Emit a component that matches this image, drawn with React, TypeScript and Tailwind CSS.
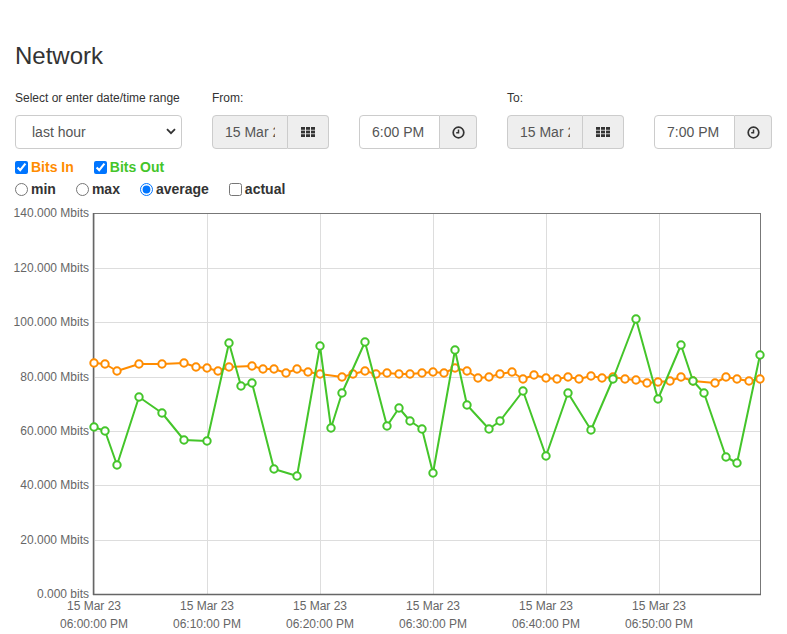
import React from "react";

const ORANGE = "#ff8c00";
const GREEN = "#44c52a";

// page-space points (x, y) read off the chart
const bitsIn: [number, number][] = [
  [94, 363], [105, 364], [117, 371], [139, 364], [162, 364], [184, 363], [196, 367], [207, 368],
  [218, 371], [229, 367], [252, 366], [263, 369], [274, 369], [286, 373], [297, 369], [308, 372],
  [320, 374], [342, 377], [353, 374], [365, 371], [376, 374], [387, 373], [399, 374], [410, 374],
  [422, 373], [433, 372], [444, 373], [455, 368], [467, 371], [478, 378], [489, 377], [500, 374],
  [512, 372], [523, 379], [534, 375], [546, 378], [557, 379], [568, 377], [579, 379], [591, 376],
  [602, 378], [613, 377], [625, 379], [636, 380], [647, 383], [658, 382], [670, 381], [681, 377],
  [693, 381], [715, 383], [726, 377], [737, 379], [749, 381], [760, 379],
];

const bitsOut: [number, number][] = [
  [94, 427], [105, 431], [117, 465], [139, 397], [162, 413], [184, 440], [207, 441], [229, 343],
  [241, 386], [252, 383], [274, 469], [297, 476], [320, 346], [331, 428], [342, 393], [365, 342],
  [387, 426], [399, 408], [410, 421], [422, 429], [433, 473], [455, 350], [467, 405], [489, 429],
  [500, 421], [523, 391], [546, 456], [568, 393], [591, 430], [613, 379], [636, 319], [658, 399],
  [681, 345], [693, 381], [704, 393], [726, 457], [737, 463], [760, 355],
];

const yTicks = [
  { y: 213, label: "140.000 Mbits" },
  { y: 268, label: "120.000 Mbits" },
  { y: 322, label: "100.000 Mbits" },
  { y: 377, label: "80.000 Mbits" },
  { y: 431, label: "60.000 Mbits" },
  { y: 485, label: "40.000 Mbits" },
  { y: 540, label: "20.000 Mbits" },
  { y: 594, label: "0.000 bits" },
];

const xTicks = [
  { x: 94, t: "06:00:00 PM" },
  { x: 207, t: "06:10:00 PM" },
  { x: 320, t: "06:20:00 PM" },
  { x: 433, t: "06:30:00 PM" },
  { x: 546, t: "06:40:00 PM" },
  { x: 659, t: "06:50:00 PM" },
];

// the svg sits at this page offset, data above is in page coords
const SVG_TOP = 202;

function Series({ pts, color }: { pts: [number, number][]; color: string }) {
  return (
    <g>
      <polyline
        points={pts.map(([x, y]) => `${x},${y}`).join(" ")}
        fill="none"
        stroke={color}
        strokeWidth={2}
        strokeLinejoin="round"
      />
      {pts.map(([x, y], i) => (
        <circle key={i} cx={x} cy={y} r={3.7} fill="#fff" stroke={color} strokeWidth={2} />
      ))}
    </g>
  );
}

function GridIcon() {
  const cells = [];
  for (let r = 0; r < 3; r++)
    for (let c = 0; c < 3; c++)
      cells.push(<rect key={`${r}-${c}`} x={c * 5} y={r * 3.6} width={4} height={2.8} fill="#333" />);
  return (
    <svg width="14" height="10" viewBox="0 0 14 10">
      {cells}
    </svg>
  );
}

function ClockIcon() {
  return (
    <svg width="13" height="13" viewBox="0 0 13 13">
      <circle cx="6.5" cy="6.5" r="5.3" fill="none" stroke="#333" strokeWidth="1.7" />
      <path d="M6.5 3.4 V6.8 H4.2" fill="none" stroke="#333" strokeWidth="1.5" />
    </svg>
  );
}

function DateGroup() {
  return (
    <div className="flex h-[34px] w-[117px]">
      <input
        readOnly
        value="15 Mar 2023"
        className="w-[76px] h-full border border-[#ccc] rounded-l-[4px] bg-[#eee] px-3 text-[14px] text-[#555] outline-none"
      />
      <div className="w-[41px] h-full border border-l-0 border-[#ccc] rounded-r-[4px] bg-[#eee] flex items-center justify-center">
        <GridIcon />
      </div>
    </div>
  );
}

function TimeGroup({ value }: { value: string }) {
  return (
    <div className="flex h-[34px] w-[118px]">
      <input
        readOnly
        value={value}
        className="w-[81px] h-full border border-[#ccc] rounded-l-[4px] bg-white px-3 text-[14px] text-[#555] outline-none"
      />
      <div className="w-[37px] h-full border border-l-0 border-[#ccc] rounded-r-[4px] bg-[#eee] flex items-center justify-center">
        <ClockIcon />
      </div>
    </div>
  );
}

export default function App() {
  return (
    <div className="font-['Liberation_Sans',Arial,sans-serif] text-[#333] bg-white">
      <div className="px-[15px] h-[202px]">
        <h1 className="pt-[43px] text-[24px] leading-[26px] font-normal">Network</h1>

        <div className="flex mt-[21px]">
          <div className="w-[167px]">
            <div className="text-[12px] leading-[17px] mb-[8px]">Select or enter date/time range</div>
            <div className="relative h-[34px]">
              <select
                defaultValue="hour"
                className="appearance-none w-full h-full border border-[#ccc] rounded-[4px] bg-white pl-[16px] text-[14px] text-[#555] outline-none"
              >
                <option value="hour">last hour</option>
                <option value="day">last day</option>
                <option value="week">last week</option>
              </select>
              <svg
                className="absolute right-[6px] top-[13px] pointer-events-none"
                width="10"
                height="7"
                viewBox="0 0 10 7"
              >
                <path d="M1 1.2 L5 5.2 L9 1.2" fill="none" stroke="#333" strokeWidth="1.8" />
              </svg>
            </div>
          </div>

          <div className="ml-[30px]">
            <div className="text-[12px] leading-[17px] mb-[8px]">From:</div>
            <div className="flex gap-[30px]">
              <DateGroup />
              <TimeGroup value="6:00 PM" />
            </div>
          </div>

          <div className="ml-[30px]">
            <div className="text-[12px] leading-[17px] mb-[8px]">To:</div>
            <div className="flex gap-[30px]">
              <DateGroup />
              <TimeGroup value="7:00 PM" />
            </div>
          </div>
        </div>

        <div className="flex items-center gap-[20px] h-[22px] mt-[7px] text-[14px] font-bold">
          <label className="flex items-center gap-[3px]">
            <input type="checkbox" defaultChecked className="w-[13px] h-[13px] m-0" />
            <span style={{ color: ORANGE }}>Bits In</span>
          </label>
          <label className="flex items-center gap-[3px]">
            <input type="checkbox" defaultChecked className="w-[13px] h-[13px] m-0" />
            <span style={{ color: GREEN }}>Bits Out</span>
          </label>
        </div>

        <div className="flex items-center gap-[20px] h-[23px] text-[14px] font-bold text-[#333]">
          <label className="flex items-center gap-[3px]">
            <input type="radio" name="agg" className="w-[13px] h-[13px] m-0" />
            <span>min</span>
          </label>
          <label className="flex items-center gap-[3px]">
            <input type="radio" name="agg" className="w-[13px] h-[13px] m-0" />
            <span>max</span>
          </label>
          <label className="flex items-center gap-[3px]">
            <input type="radio" name="agg" defaultChecked className="w-[13px] h-[13px] m-0" />
            <span>average</span>
          </label>
          <label className="flex items-center gap-[3px]">
            <input type="checkbox" className="w-[13px] h-[13px] m-0" />
            <span>actual</span>
          </label>
        </div>
      </div>

      <svg width="787" height="430" className="block" style={{ fontFamily: "'Liberation Sans', Arial, sans-serif" }}>
        <g transform={`translate(0,-${SVG_TOP})`}>
          {yTicks.map((t) => (
            <g key={t.label}>
              <line x1={94} x2={761} y1={t.y + 0.5} y2={t.y + 0.5} stroke="#ddd" strokeWidth={1} />
              <text x={89} y={t.y + 4} textAnchor="end" fontSize={12} fill="#666">
                {t.label}
              </text>
            </g>
          ))}
          {xTicks.map((t) => (
            <g key={t.t}>
              <line x1={t.x + 0.5} x2={t.x + 0.5} y1={213} y2={595} stroke="#ddd" strokeWidth={1} />
              <text x={t.x} y={610} textAnchor="middle" fontSize={12} fill="#666">
                15 Mar 23
              </text>
              <text x={t.x} y={628} textAnchor="middle" fontSize={12} fill="#666">
                {t.t}
              </text>
            </g>
          ))}
          <rect x={93.5} y={213.5} width={667} height={381} fill="none" stroke="#777" strokeWidth={1} />
          <line x1={93.5} x2={93.5} y1={213} y2={595} stroke="#666" strokeWidth={1.5} />
          <line x1={93} x2={761} y1={594.5} y2={594.5} stroke="#666" strokeWidth={1.5} />
          <Series pts={bitsIn} color={ORANGE} />
          <Series pts={bitsOut} color={GREEN} />
        </g>
      </svg>
    </div>
  );
}
